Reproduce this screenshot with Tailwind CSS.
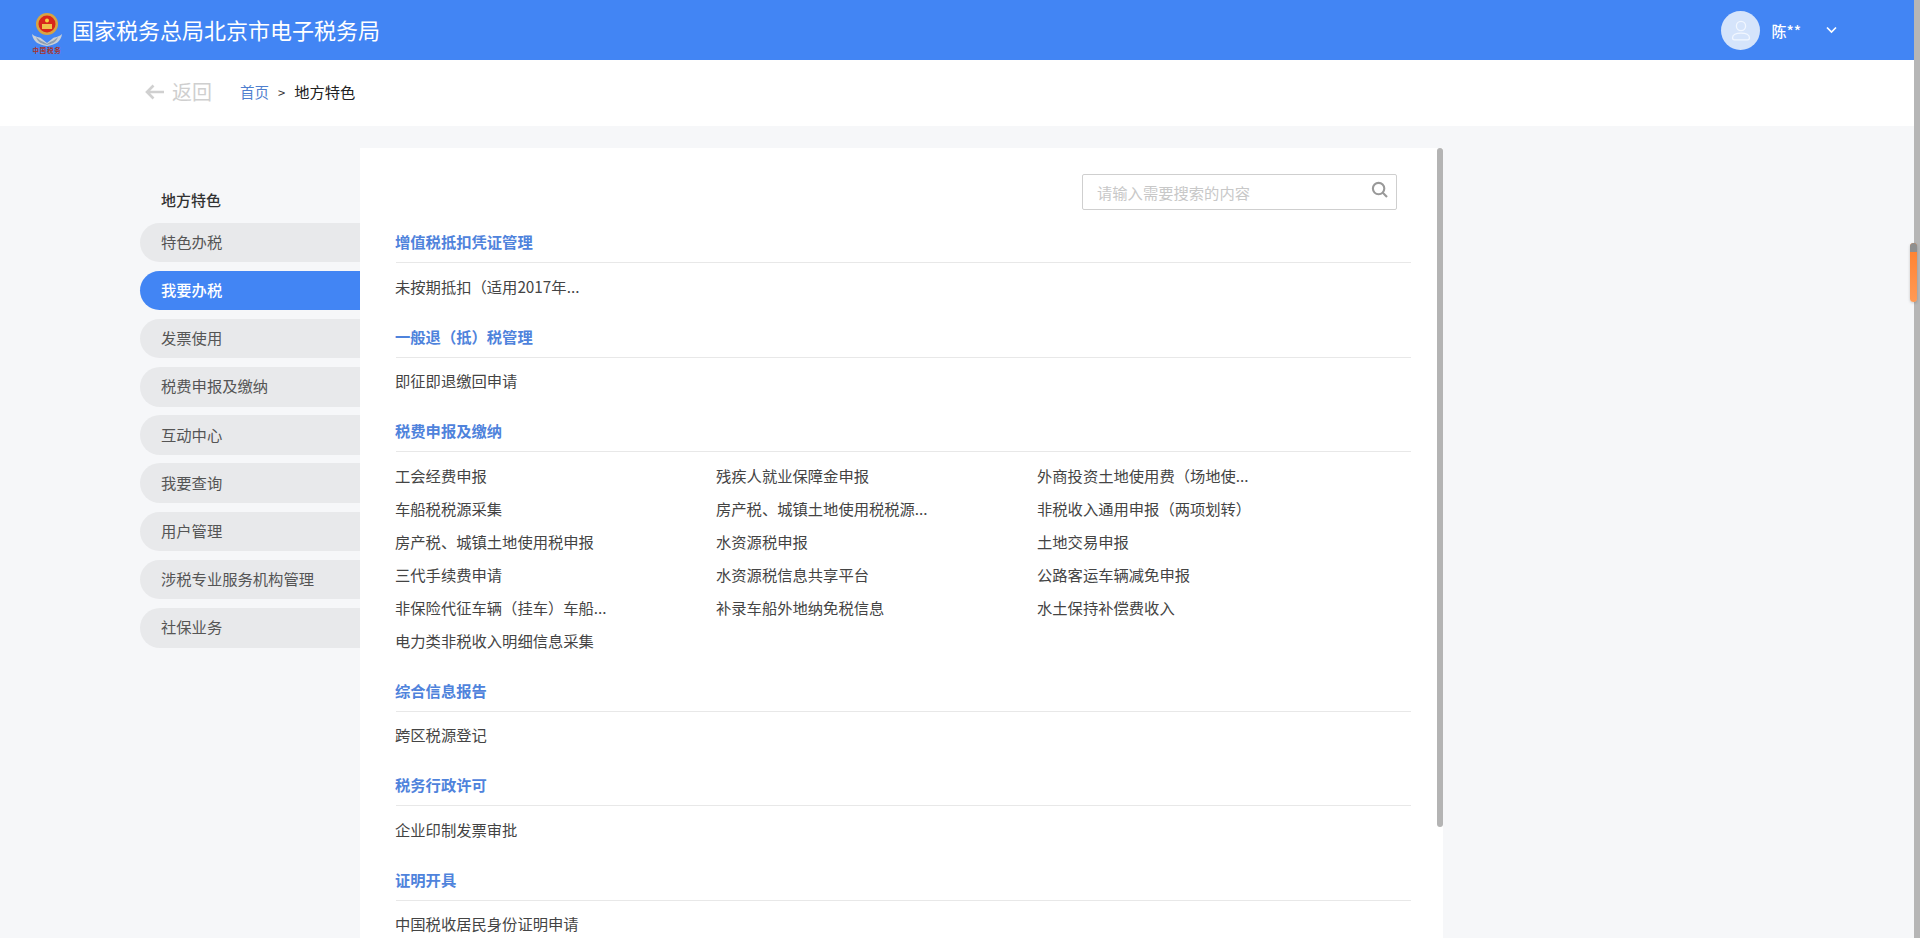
<!DOCTYPE html>
<html lang="zh-CN">
<head>
<meta charset="utf-8">
<title>地方特色</title>
<script src="https://cdn.jsdelivr.net/npm/@tailwindcss/browser@4"></script>
</head>
<body class="m-0 overflow-hidden">
<div class="relative flex h-[938px] w-[1920px] overflow-hidden bg-[#f6f7f9] font-['Noto_Sans_CJK_SC','Noto_Sans',sans-serif]">
  <div class="flex w-[1914px] flex-col">
    <header class="flex h-[60px] shrink-0 items-center bg-[#4285f4] pb-[2px] pl-[31px] pr-[77px] text-white">
      <svg class="h-[42px] w-[32px] shrink-0 translate-y-[4px]" viewBox="0 0 32 42">
        <path d="M1 22 C5 26 8 24 11 27 L16 31 L21 27 C24 24 27 26 31 22 C30 30 24 33 16 34 C8 33 2 30 1 22Z" fill="#c9d0d8"/>
        <path d="M5 25 C9 29 12 29 16 32 C20 29 23 29 27 25 C25 31 20 32 16 33 C12 32 7 31 5 25Z" fill="#8e9db0"/>
        <circle cx="16" cy="12" r="11" fill="#d9a441"/>
        <circle cx="16" cy="12" r="8.5" fill="#d8261c"/>
        <rect x="11" y="12" width="10" height="5" fill="#efc14b"/>
        <circle cx="16" cy="8.5" r="2" fill="#f4d03f"/>
        <text x="16" y="41" text-anchor="middle" font-size="6.5" letter-spacing="0.8" font-weight="700" fill="#a8322b">中国税务</text>
      </svg>
      <h1 class="ml-[9px] text-[22px] font-normal leading-none">国家税务总局北京市电子税务局</h1>
      <div class="ml-auto flex translate-y-[1px] items-center">
        <div class="flex h-[39px] w-[39px] translate-x-[1px] items-center justify-center rounded-full bg-[#d5e4fb]">
          <svg class="h-[24px] w-[24px]" viewBox="0 0 24 24" fill="none" stroke="#f2f7ff" stroke-width="1.3">
            <circle cx="12" cy="8" r="4.6"/>
            <path d="M3.5 20 C3.5 16.5 7 15.2 12 15.2 C17 15.2 20.5 16.5 20.5 20 C20.5 21.3 19.8 21.8 18.5 21.8 H5.5 C4.2 21.8 3.5 21.3 3.5 20Z"/>
          </svg>
        </div>
        <span class="ml-[12px] text-[15px] font-medium leading-none">陈**</span>
        <svg class="ml-[25px] h-[8px] w-[11px]" viewBox="0 0 11 8" fill="none" stroke="#fff" stroke-width="1.7"><path d="M1 1.5 L5.5 6 L10 1.5"/></svg>
      </div>
    </header>

    <nav class="flex h-[66px] shrink-0 items-center bg-white pb-[2px] pl-[145px]">
      <svg class="h-[16px] w-[19px]" viewBox="0 0 19 16" fill="none" stroke="#d0d0d0" stroke-width="2.6"><path d="M8.5 1.5 L2 8 L8.5 14.5 M2.5 8 H19"/></svg>
      <span class="ml-[8px] text-[20px] leading-none text-[#cfcfcf]">返回</span>
      <a class="ml-[28px] text-[14.5px] leading-none text-[#4f7fcf]">首页</a>
      <span class="ml-[9px] text-[13px] leading-none text-[#333]">&gt;</span>
      <span class="ml-[9px] text-[15.3px] leading-none text-[#222]">地方特色</span>
    </nav>

    <div class="flex min-h-0 flex-1 pl-[140px] pt-[22px]">
      <aside class="w-[220px] shrink-0 pt-[41.5px]">
        <div class="mb-[13px] pb-px pl-[21px] text-[15px] font-medium leading-[19px] text-[#333]">地方特色</div>
        <ul class="flex flex-col gap-[8.6px] text-[15.3px] text-[#555]">
          <li class="flex h-[39.6px] items-center rounded-l-full bg-[#e8e9eb] pb-[2px] pl-[21px]">特色办税</li>
          <li class="flex h-[39.6px] items-center rounded-l-full bg-[#4285f4] pb-[2px] pl-[21px] font-medium text-white">我要办税</li>
          <li class="flex h-[39.6px] items-center rounded-l-full bg-[#e8e9eb] pb-[2px] pl-[21px]">发票使用</li>
          <li class="flex h-[39.6px] items-center rounded-l-full bg-[#e8e9eb] pb-[2px] pl-[21px]">税费申报及缴纳</li>
          <li class="flex h-[39.6px] items-center rounded-l-full bg-[#e8e9eb] pb-[2px] pl-[21px]">互动中心</li>
          <li class="flex h-[39.6px] items-center rounded-l-full bg-[#e8e9eb] pb-[2px] pl-[21px]">我要查询</li>
          <li class="flex h-[39.6px] items-center rounded-l-full bg-[#e8e9eb] pb-[2px] pl-[21px]">用户管理</li>
          <li class="flex h-[39.6px] items-center rounded-l-full bg-[#e8e9eb] pb-[2px] pl-[21px]">涉税专业服务机构管理</li>
          <li class="flex h-[39.6px] items-center rounded-l-full bg-[#e8e9eb] pb-[2px] pl-[21px]">社保业务</li>
        </ul>
      </aside>

      <main class="relative w-[1083px] shrink-0 overflow-hidden bg-white pl-[36px] pr-[32px] pt-[26px]">
        <div class="absolute right-0 top-0 h-[679px] w-[6px] rounded-full bg-[#b4b4b4]"></div>
        <div class="flex justify-end pr-[14px]">
          <div class="relative h-[36px] w-[315px]">
            <input class="h-full w-full rounded-[2px] border border-[#cfcfcf] bg-white pl-[14px] pr-[36px] text-[15.3px] outline-none placeholder:text-[#c8c8c8]" placeholder="请输入需要搜索的内容">
            <svg class="absolute right-[8px] top-[7px] h-[18px] w-[18px]" viewBox="0 0 18 18" fill="none" stroke="#999" stroke-width="2.1"><circle cx="7.6" cy="7.6" r="5.7"/><path d="M11.8 11.8 L16 16"/></svg>
          </div>
        </div>

        <div class="mt-[15px] indent-[-1px] text-[15.3px] text-[#444]">
          <section class="mb-[15px]">
            <h2 class="flex h-[38px] items-center border-b border-[#e8e8e8] pb-[4px] text-[15.3px] font-bold text-[#4f83dc]">增值税抵扣凭证管理</h2>
            <ul class="grid grid-cols-[321px_321px_321px] pt-[8.5px]"><li class="h-[33px] leading-[29px]">未按期抵扣（适用2017年...</li></ul>
          </section>
          <section class="mb-[15px]">
            <h2 class="flex h-[38px] items-center border-b border-[#e8e8e8] pb-[4px] text-[15.3px] font-bold text-[#4f83dc]">一般退（抵）税管理</h2>
            <ul class="grid grid-cols-[321px_321px_321px] pt-[8.5px]"><li class="h-[33px] leading-[29px]">即征即退缴回申请</li></ul>
          </section>
          <section class="mb-[15px]">
            <h2 class="flex h-[38px] items-center border-b border-[#e8e8e8] pb-[4px] text-[15.3px] font-bold text-[#4f83dc]">税费申报及缴纳</h2>
            <ul class="grid grid-cols-[321px_321px_321px] pt-[8.5px]">
              <li class="h-[33px] leading-[29px]">工会经费申报</li><li class="h-[33px] leading-[29px]">残疾人就业保障金申报</li><li class="h-[33px] leading-[29px]">外商投资土地使用费（场地使...</li>
              <li class="h-[33px] leading-[29px]">车船税税源采集</li><li class="h-[33px] leading-[29px]">房产税、城镇土地使用税税源...</li><li class="h-[33px] leading-[29px]">非税收入通用申报（两项划转）</li>
              <li class="h-[33px] leading-[29px]">房产税、城镇土地使用税申报</li><li class="h-[33px] leading-[29px]">水资源税申报</li><li class="h-[33px] leading-[29px]">土地交易申报</li>
              <li class="h-[33px] leading-[29px]">三代手续费申请</li><li class="h-[33px] leading-[29px]">水资源税信息共享平台</li><li class="h-[33px] leading-[29px]">公路客运车辆减免申报</li>
              <li class="h-[33px] leading-[29px]">非保险代征车辆（挂车）车船...</li><li class="h-[33px] leading-[29px]">补录车船外地纳免税信息</li><li class="h-[33px] leading-[29px]">水土保持补偿费收入</li>
              <li class="h-[33px] leading-[29px]">电力类非税收入明细信息采集</li>
            </ul>
          </section>
          <section class="mb-[15px]">
            <h2 class="flex h-[38px] items-center border-b border-[#e8e8e8] pb-[4px] text-[15.3px] font-bold text-[#4f83dc]">综合信息报告</h2>
            <ul class="grid grid-cols-[321px_321px_321px] pt-[8.5px]"><li class="h-[33px] leading-[29px]">跨区税源登记</li></ul>
          </section>
          <section class="mb-[15px]">
            <h2 class="flex h-[38px] items-center border-b border-[#e8e8e8] pb-[4px] text-[15.3px] font-bold text-[#4f83dc]">税务行政许可</h2>
            <ul class="grid grid-cols-[321px_321px_321px] pt-[8.5px]"><li class="h-[33px] leading-[29px]">企业印制发票审批</li></ul>
          </section>
          <section class="mb-[15px]">
            <h2 class="flex h-[38px] items-center border-b border-[#e8e8e8] pb-[4px] text-[15.3px] font-bold text-[#4f83dc]">证明开具</h2>
            <ul class="grid grid-cols-[321px_321px_321px] pt-[8.5px]"><li class="h-[33px] leading-[29px]">中国税收居民身份证明申请</li></ul>
          </section>
        </div>
      </main>
    </div>
  </div>
  <div class="w-[6px] shrink-0 bg-[#b6b6b6]"></div>
  <div class="absolute left-[1910px] top-[243px] h-[59px] w-[7px] overflow-hidden rounded-[3.5px] bg-gradient-to-b from-[#ff7f2a] to-[#ff9a55] shadow-[0_1px_3px_rgba(0,0,0,0.2)]">
    <div class="h-[9px] bg-[#8f8f8f]"></div>
  </div>
</div>
</body>
</html>
